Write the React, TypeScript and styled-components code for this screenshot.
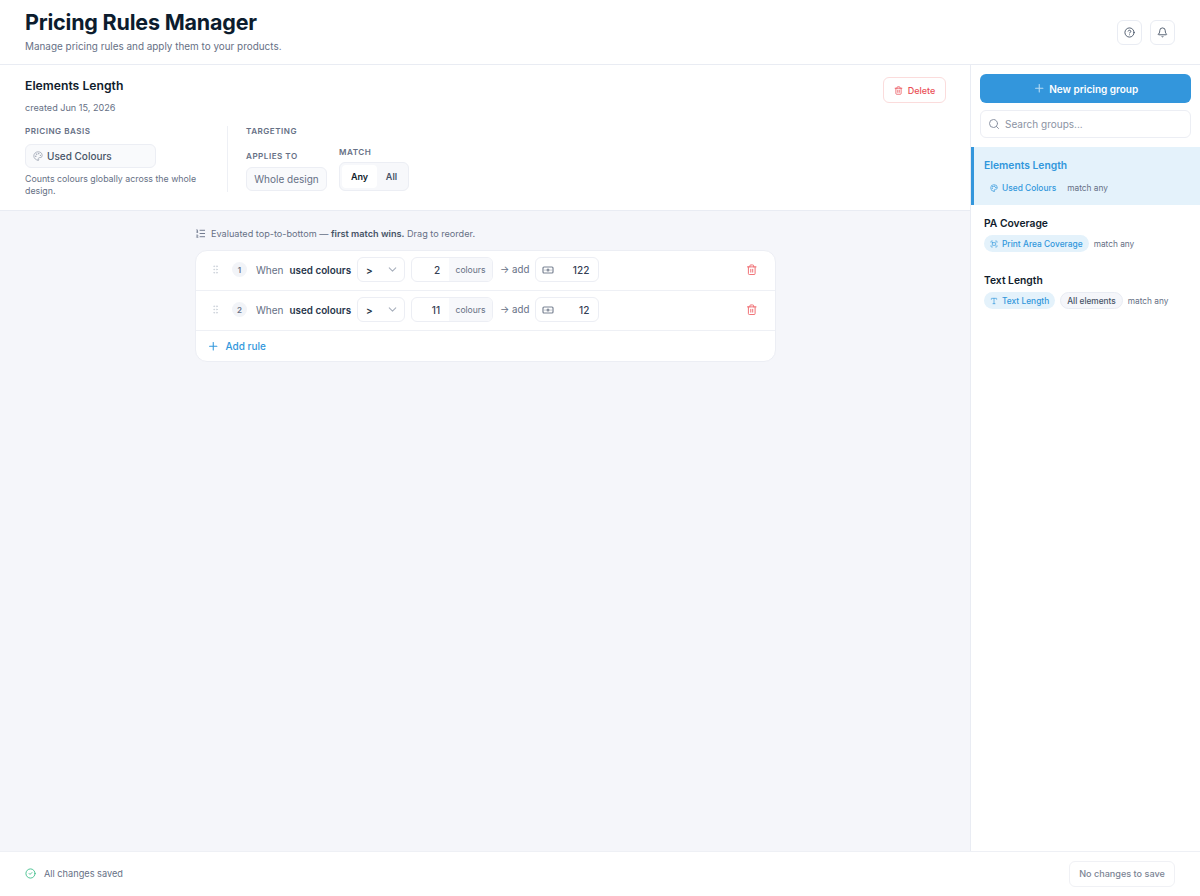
import styled, { createGlobalStyle } from "styled-components";
import {
  Banknote,
  Bell,
  ChevronDown,
  CircleCheck,
  CircleHelp,
  Fullscreen,
  GripVertical,
  ListOrdered,
  Palette,
  Plus,
  Search,
  Trash2,
  Type,
} from "lucide-react";

const rules = [
  { id: 1, count: "2", price: "122" },
  { id: 2, count: "11", price: "12" },
];

function App() {
  return (
    <>
      <GlobalStyle />
      <Page>
        <Header>
          <div>
            <Title>Pricing Rules Manager</Title>
            <Subtitle>Manage pricing rules and apply them to your products.</Subtitle>
          </div>
          <HeaderActions>
            <IconButton>
              <CircleHelp size={11} />
            </IconButton>
            <IconButton>
              <Bell size={11} />
            </IconButton>
          </HeaderActions>
        </Header>

        <Body>
          <Main>
            <Editor>
              <EditorTop>
                <div>
                  <GroupName>Elements Length</GroupName>
                  <Created>created Jun 15, 2026</Created>
                </div>
                <DeleteButton>
                  <Trash2 size={9} />
                  Delete
                </DeleteButton>
              </EditorTop>
              <EditorFields>
                <BasisColumn>
                  <FieldLabel>Pricing basis</FieldLabel>
                  <BasisSelect>
                    <Palette size={10} color="#a0a7b4" />
                    Used Colours
                  </BasisSelect>
                  <Hint>Counts colours globally across the whole design.</Hint>
                </BasisColumn>
                <TargetColumn>
                  <FieldLabel>Targeting</FieldLabel>
                  <TargetRow>
                    <div>
                      <FieldLabel>Applies to</FieldLabel>
                      <ScopePill>Whole design</ScopePill>
                    </div>
                    <div>
                      <FieldLabel>Match</FieldLabel>
                      <Segment>
                        <SegmentItem $active>Any</SegmentItem>
                        <SegmentItem>All</SegmentItem>
                      </Segment>
                    </div>
                  </TargetRow>
                </TargetColumn>
              </EditorFields>
            </Editor>

            <RulesArea>
              <RulesInner>
                <RulesNote>
                  <ListOrdered size={11} color="#667085" />
                  <span>
                    Evaluated top-to-bottom — <b>first match wins.</b> Drag to reorder.
                  </span>
                </RulesNote>
                <RulesCard>
                  {rules.map((rule) => (
                    <RuleRow key={rule.id}>
                      <GripVertical size={11} color="#cfd4dc" />
                      <RuleIndex>{rule.id}</RuleIndex>
                      <When>When</When>
                      <Metric>used colours</Metric>
                      <OperatorSelect>
                        &gt;
                        <ChevronDown size={13} color="#a9b0bd" />
                      </OperatorSelect>
                      <CountField>
                        <CountValue>{rule.count}</CountValue>
                        <CountUnit>colours</CountUnit>
                      </CountField>
                      <AddLabel>→ add</AddLabel>
                      <PriceField>
                        <Banknote size={12} color="#7b8494" strokeWidth={2.4} />
                        {rule.price}
                      </PriceField>
                      <RemoveRule>
                        <Trash2 size={11.5} />
                      </RemoveRule>
                    </RuleRow>
                  ))}
                  <AddRule>
                    <Plus size={12.5} />
                    Add rule
                  </AddRule>
                </RulesCard>
              </RulesInner>
            </RulesArea>
          </Main>

          <Sidebar>
            <SidebarTop>
              <NewGroupButton>
                <Plus size={12.5} color="#b9dcf4" />
                New pricing group
              </NewGroupButton>
              <SearchBox>
                <Search size={12} color="#8b93a3" />
                Search groups...
              </SearchBox>
            </SidebarTop>

            <GroupActive>
              <GroupTitle $active>Elements Length</GroupTitle>
              <ActiveMeta>
                <PlainTag>
                  <Palette size={8} />
                  Used Colours
                </PlainTag>
                <MatchText>match any</MatchText>
              </ActiveMeta>
            </GroupActive>
            <GroupItem>
              <GroupTitle>PA Coverage</GroupTitle>
              <GroupMeta>
                <BlueTag>
                  <Fullscreen size={8} />
                  Print Area Coverage
                </BlueTag>
                <MatchText>match any</MatchText>
              </GroupMeta>
            </GroupItem>
            <GroupItem>
              <GroupTitle>Text Length</GroupTitle>
              <GroupMeta>
                <BlueTag>
                  <Type size={8} />
                  Text Length
                </BlueTag>
                <GreyTag>All elements</GreyTag>
                <MatchText>match any</MatchText>
              </GroupMeta>
            </GroupItem>
          </Sidebar>
        </Body>

        <Footer>
          <SavedStatus>
            <CircleCheck size={11} color="#43c08d" />
            All changes saved
          </SavedStatus>
          <SaveButton>No changes to save</SaveButton>
        </Footer>
      </Page>
    </>
  );
}

export default App;

const GlobalStyle = createGlobalStyle`
  * {
    box-sizing: border-box;
  }

  body {
    margin: 0;
    font-family: Inter, "Liberation Sans", sans-serif;
    background: #fff;
    color: #101c2c;
  }
`;

const Page = styled.div`
  display: flex;
  flex-direction: column;
  height: 896px;
  overflow: hidden;
`;

const Header = styled.header`
  display: flex;
  justify-content: space-between;
  align-items: center;
  height: 65px;
  padding: 0 25px;
  border-bottom: 1px solid #e9ecf3;
  background: #fff;
`;

const Title = styled.h1`
  margin: -3px 0 0;
  font-size: 21.5px;
  line-height: 27px;
  font-weight: 700;
  letter-spacing: -0.2px;
  color: #0c1c2e;
`;

const Subtitle = styled.p`
  margin: 4px 0 0;
  font-size: 9.92px;
  line-height: 13px;
  color: #667085;
`;

const HeaderActions = styled.div`
  display: flex;
  gap: 8px;
`;

const IconButton = styled.button`
  display: flex;
  align-items: center;
  justify-content: center;
  width: 25px;
  height: 25px;
  padding: 0;
  border: 1px solid #e9ecf3;
  border-radius: 6px;
  background: #fff;
  color: #475467;
`;

const Body = styled.div`
  flex: 1;
  display: flex;
  min-height: 0;
`;

const Main = styled.main`
  flex: 1;
  display: flex;
  flex-direction: column;
  min-width: 0;
`;

const Editor = styled.section`
  height: 146px;
  padding: 13px 24px 0 25px;
  background: #fff;
  border-bottom: 1px solid #e9ecf3;
`;

const EditorTop = styled.div`
  display: flex;
  justify-content: space-between;
  align-items: flex-start;
`;

const GroupName = styled.h2`
  margin: 0;
  font-size: 12.2px;
  line-height: 16px;
  font-weight: 600;
  color: #101c2c;
`;

const Created = styled.div`
  margin-top: 8px;
  font-size: 9.1px;
  line-height: 11px;
  color: #667085;
`;

const DeleteButton = styled.button`
  display: flex;
  align-items: center;
  justify-content: center;
  gap: 5px;
  width: 63px;
  height: 26px;
  margin-top: -1px;
  padding: 0;
  border: 1px solid #fbdcdc;
  border-radius: 6px;
  background: #fff;
  color: #ea4f57;
  font: 500 9px Inter, sans-serif;
`;

const EditorFields = styled.div`
  display: flex;
  margin-top: 13px;
`;

const BasisColumn = styled.div`
  width: 202px;
  padding-right: 20px;
`;

const TargetColumn = styled.div`
  height: 66px;
  padding-left: 18px;
  border-left: 1px solid #eef0f5;
`;

const FieldLabel = styled.div`
  font-size: 8.1px;
  line-height: 11px;
  font-weight: 600;
  letter-spacing: 0.5px;
  text-transform: uppercase;
  color: #667085;
`;

const BasisSelect = styled.div`
  display: flex;
  align-items: center;
  gap: 4px;
  width: 131px;
  height: 24px;
  margin-top: 7px;
  padding-left: 7px;
  border: 1px solid #eceef4;
  border-radius: 6px;
  background: #f9fafc;
  font-size: 10px;
  font-weight: 500;
  color: #475467;
`;

const Hint = styled.p`
  margin: 5px 0 0;
  font-size: 8.8px;
  line-height: 12px;
  color: #667085;
`;

const TargetRow = styled.div`
  display: flex;
  align-items: flex-end;
  gap: 12px;
  margin-top: 9.5px;
`;

const ScopePill = styled.div`
  display: flex;
  align-items: center;
  justify-content: center;
  width: 81px;
  height: 24px;
  margin-top: 5px;
  border: 1px solid #eceef4;
  border-radius: 6px;
  background: #f9fafc;
  font-size: 10px;
  color: #667085;
`;

const Segment = styled.div`
  display: flex;
  width: 70px;
  height: 29.5px;
  margin-top: 4px;
  padding: 2px;
  border: 1px solid #eceef4;
  border-radius: 6px;
  background: #f7f8fb;
`;

const SegmentItem = styled.div<{ $active?: boolean }>`
  display: flex;
  align-items: center;
  justify-content: center;
  width: ${({ $active }) => ($active ? "35px" : "29px")};
  border-radius: 4px;
  background: ${({ $active }) => ($active ? "#fff" : "transparent")};
  font-size: 9px;
  font-weight: 600;
  color: ${({ $active }) => ($active ? "#101c2c" : "#475467")};
`;

const RulesArea = styled.div`
  flex: 1;
  padding: 16px 195px 0;
  background: #f5f6fa;
`;

const RulesInner = styled.div`
  width: 581px;
`;

const RulesNote = styled.div`
  display: flex;
  align-items: center;
  gap: 5px;
  height: 13px;
  margin-bottom: 10px;
  font-size: 9.15px;
  color: #667085;

  b {
    font-weight: 600;
    color: #475467;
  }
`;

const RulesCard = styled.div`
  border: 1px solid #eceef4;
  border-radius: 12px;
  background: #fff;
  overflow: hidden;
`;

const RuleRow = styled.div`
  display: flex;
  align-items: center;
  height: 40px;
  padding: 0 0 2px 14px;
  border-bottom: 1px solid #eef0f5;
`;

const RuleIndex = styled.span`
  display: flex;
  align-items: center;
  justify-content: center;
  width: 15px;
  height: 15px;
  margin-left: 11px;
  border-radius: 50%;
  background: #f2f4f8;
  font-size: 8px;
  font-weight: 600;
  color: #667085;
`;

const When = styled.span`
  margin-left: 9px;
  font-size: 10px;
  color: #667085;
`;

const Metric = styled.span`
  margin-left: 6px;
  font-size: 9.85px;
  font-weight: 600;
  color: #27354a;
`;

const OperatorSelect = styled.div`
  display: flex;
  align-items: center;
  justify-content: space-between;
  width: 48px;
  height: 25px;
  margin-left: 6px;
  padding: 0 5px 0 8px;
  border: 1px solid #eceef4;
  border-radius: 6px;
  font-size: 10px;
  font-weight: 600;
  color: #27354a;
`;

const CountField = styled.div`
  display: flex;
  width: 82px;
  height: 25px;
  margin-left: 6px;
  border: 1px solid #eceef4;
  border-radius: 6px;
  overflow: hidden;
`;

const CountValue = styled.span`
  display: flex;
  align-items: center;
  justify-content: flex-end;
  width: 37px;
  padding-right: 9px;
  font-size: 10px;
  font-weight: 500;
  color: #344054;
`;

const CountUnit = styled.span`
  flex: 1;
  display: flex;
  align-items: center;
  justify-content: center;
  background: #f7f8fb;
  font-size: 8.6px;
  color: #667085;
`;

const AddLabel = styled.span`
  margin-left: 7px;
  font-size: 9.7px;
  color: #667085;
`;

const PriceField = styled.div`
  display: flex;
  align-items: center;
  justify-content: space-between;
  width: 64px;
  height: 25px;
  margin-left: 6px;
  padding: 0 9px 0 6px;
  border: 1px solid #eceef4;
  border-radius: 6px;
  font-size: 10px;
  font-weight: 500;
  color: #344054;
`;

const RemoveRule = styled.span`
  display: flex;
  margin-left: auto;
  margin-right: 18px;
  color: #ef6b70;
`;

const AddRule = styled.div`
  display: flex;
  align-items: center;
  gap: 6px;
  height: 30px;
  padding-left: 11px;
  font-size: 10px;
  font-weight: 500;
  color: #3197dc;
`;

const Sidebar = styled.aside`
  width: 230px;
  border-left: 1px solid #e9ecf3;
  background: #fff;
`;

const SidebarTop = styled.div`
  display: flex;
  flex-direction: column;
  gap: 7px;
  height: 82px;
  padding: 9px 9px 0;
`;

const NewGroupButton = styled.button`
  display: flex;
  align-items: center;
  justify-content: center;
  gap: 4px;
  height: 29px;
  padding: 0;
  border: none;
  border-radius: 6px;
  background: #3396dc;
  color: #fff;
  font: 600 10px Inter, sans-serif;
`;

const SearchBox = styled.div`
  display: flex;
  align-items: center;
  gap: 5px;
  height: 28px;
  padding-left: 7px;
  border: 1px solid #eceef4;
  border-radius: 6px;
  font-size: 10px;
  color: #8b93a3;
`;

const GroupItem = styled.div`
  height: 57px;
  padding: 11px 13px 0;
`;

const GroupActive = styled(GroupItem)`
  height: 58px;
  border-left: 3px solid #3396dc;
  padding: 11px 10px 0;
  background: #e4f2fb;
`;

const GroupTitle = styled.div<{ $active?: boolean }>`
  font-size: 10.3px;
  line-height: 14px;
  font-weight: 600;
  color: ${({ $active }) => ($active ? "#3197dc" : "#101c2c")};
`;

const GroupMeta = styled.div`
  display: flex;
  align-items: center;
  gap: 5px;
  margin-top: 5px;
`;

const ActiveMeta = styled(GroupMeta)`
  margin-top: 7px;
`;

const BlueTag = styled.span`
  display: flex;
  align-items: center;
  gap: 4px;
  height: 17px;
  padding: 0 6px;
  border-radius: 9px;
  background: #e4f2fb;
  font-size: 8.4px;
  font-weight: 500;
  color: #3197dc;
`;

const PlainTag = styled(BlueTag)`
  background: transparent;
`;

const GreyTag = styled.span`
  display: flex;
  align-items: center;
  height: 17px;
  padding: 0 6px;
  border: 1px solid #e9ecf3;
  border-radius: 9px;
  background: #f5f6fa;
  font-size: 8.3px;
  font-weight: 500;
  color: #475467;
`;

const MatchText = styled.span`
  font-size: 8.3px;
  color: #667085;
`;

const Footer = styled.footer`
  display: flex;
  justify-content: space-between;
  align-items: center;
  height: 45px;
  padding: 0 25px 1px;
  border-top: 1px solid #eef0f5;
  background: #fff;
`;

const SavedStatus = styled.div`
  display: flex;
  align-items: center;
  gap: 8px;
  font-size: 9.2px;
  color: #667085;
`;

const SaveButton = styled.button`
  width: 106px;
  height: 26px;
  padding: 0;
  border: 1px solid #f0f1f5;
  border-radius: 6px;
  background: #fff;
  color: #7b8494;
  font: 500 9.1px Inter, sans-serif;
`;
